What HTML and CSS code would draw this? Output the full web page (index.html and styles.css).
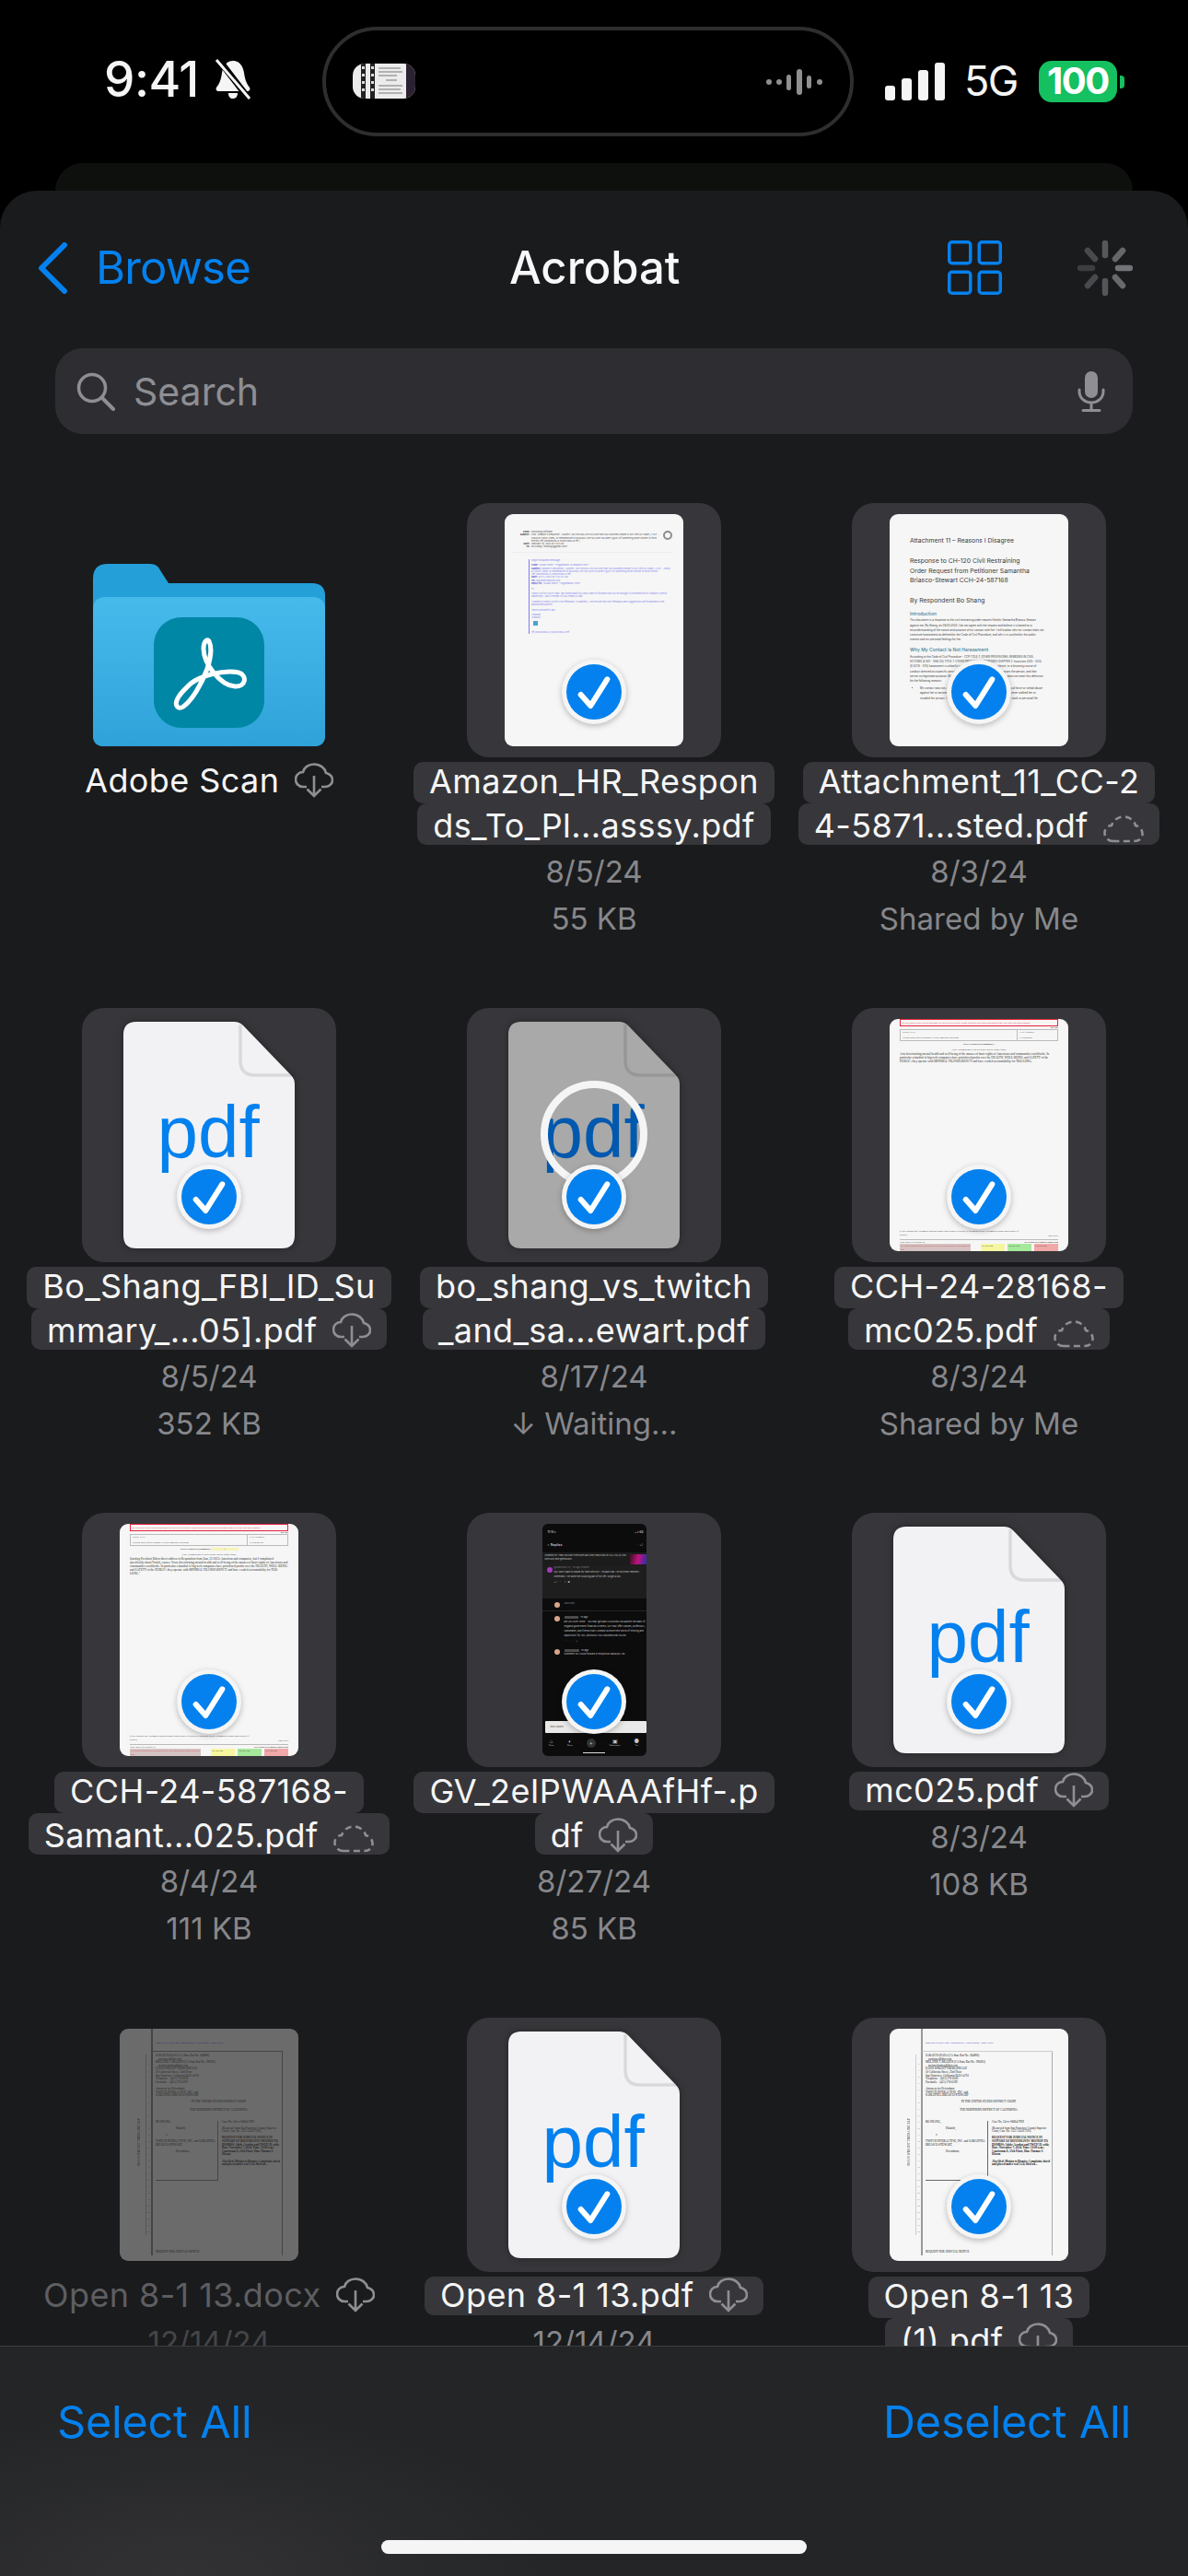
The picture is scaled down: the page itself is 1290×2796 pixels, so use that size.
FILE: index.html
```html
<!DOCTYPE html>
<html lang="en">
<head>
    <meta charset="UTF-8">
    <meta name="viewport" content="width=device-width, initial-scale=1.0">
    <title>Acrobat</title>
    <link rel="stylesheet" href="styles.css">
</head>
<body>
    <svg class="sprites" width="0" height="0">
        <symbol id="cloud-down" viewBox="0 0 42 38">
            <path d="M13 26H9C4 26 1 22 1 18C1 13 5 10 9 10C10 5 15 1.500 21 1.500C28 1.500 33 6 34 11C38 12 41 15 41 19C41 23 37 26 33 26H29" fill="none" stroke="#8e8e93" stroke-width="2.600"/>
            <path d="M21 14V36M13.500 28.500L21 36L28.500 28.500" fill="none" stroke="#8e8e93" stroke-width="2.600"/>
        </symbol>
        <symbol id="cloud-dash" viewBox="0 0 44 30">
            <path d="M11 28C5 28 1.500 24 1.500 19C1.500 14 5 11 9 11C11 5 16 1.500 22 1.500C29 1.500 34 6 35 11C39 12 42.500 15 42.500 20C42.500 25 39 28 33 28H11" fill="none" stroke="#8e8e93" stroke-width="2.600" stroke-dasharray="7 4.500"/>
        </symbol>
        <symbol id="check" viewBox="0 0 70 70">
            <circle cx="35" cy="35" r="35" fill="#f5f5f5"/>
            <circle cx="35" cy="35" r="30" fill="#0481ee"/>
            <path d="M20.700 38L31.300 50L49.300 21.300" fill="none" stroke="#fff" stroke-width="6" stroke-linecap="round" stroke-linejoin="round"/>
        </symbol>
        <symbol id="pdf-file" viewBox="0 0 186 246">
            <path d="M14 0H120Q126 0 130 4L182 58Q186 62 186 68V232Q186 246 172 246H14Q0 246 0 232V14Q0 0 14 0Z" fill="currentColor"/>
            <path d="M127 3V42Q127 58 143 58H184" fill="none" stroke="#000" stroke-opacity=".1" stroke-width="3.500"/>
        </symbol>
    </svg>

    <div class="status-bar">
        <div class="status-left">
            <span class="time">9:41</span>
            <svg class="bell" viewBox="0 0 40 44">
                <path d="M20 2C27 2 31 8 32 15C33 23 35 27 38 31C39 33 38 35 36 35H4C2 35 1 33 2 31C5 27 7 23 8 15C9 8 13 2 20 2ZM15 37H25C25 41 23 43 20 43C17 43 15 41 15 37Z" fill="#f5f5f5"/>
                <path d="M4 0L37 43" stroke="#000" stroke-width="7"/>
                <path d="M2 1L38 43" stroke="#f5f5f5" stroke-width="3"/>
            </svg>
        </div>
        <div class="island">
            <svg class="island-thumb" viewBox="0 0 68 38">
                <rect width="68" height="38" fill="#ececec"/>
                <rect x="9" width="5" height="38" fill="#222"/>
                <rect x="19" width="5" height="38" fill="#222"/>
                <path d="M10 3h3v3h-3zM10 11h3v3h-3zM10 19h3v3h-3zM10 27h3v3h-3zM20 3h3v3h-3zM20 11h3v3h-3zM20 19h3v3h-3zM20 27h3v3h-3z" fill="#ddd"/>
                <rect x="58" width="10" height="38" fill="#2a2230"/>
                <path d="M28 5h24M28 9h26M28 13h20M36 18h12M28 24h26M28 28h24M28 32h26" stroke="#777" stroke-width="1.200"/>
            </svg>
            <svg class="wave" viewBox="0 0 61 28">
                <g fill="#8f8f8f">
                    <rect x="0" y="11" width="6" height="6" rx="3"/>
                    <rect x="11" y="11" width="6" height="6" rx="3"/>
                    <rect x="22" y="6" width="5" height="17" rx="2.500"/>
                    <rect x="33" y="0" width="6" height="28" rx="3"/>
                    <rect x="44" y="7" width="5" height="14" rx="2.500"/>
                    <rect x="55" y="11" width="6" height="6" rx="3"/>
                </g>
            </svg>
        </div>
        <div class="status-right">
            <div class="signal">
                <span class="bar bar-1"></span>
                <span class="bar bar-2"></span>
                <span class="bar bar-3"></span>
                <span class="bar bar-4"></span>
            </div>
            <span class="network">5G</span>
            <div class="battery"><span class="battery-level">100</span><span class="battery-tip"></span></div>
        </div>
    </div>
    <div class="back-sheet"></div>

    <div class="sheet">
        <div class="nav">
            <div class="nav-back">
                <svg class="chevron" viewBox="0 0 34 56">
                    <path d="M30 3L5 28L30 53" fill="none" stroke="#0481ee" stroke-width="6" stroke-linecap="round" stroke-linejoin="round"/>
                </svg>
                <span>Browse</span>
            </div>
            <div class="nav-title">Acrobat</div>
            <div class="nav-actions">
                <svg class="grid-icon" viewBox="0 0 59 59">
                    <g fill="none" stroke="#0481ee" stroke-width="3.500">
                        <rect x="1.750" y="1.750" width="23" height="23" rx="3"/>
                        <rect x="34.250" y="1.750" width="23" height="23" rx="3"/>
                        <rect x="1.750" y="34.250" width="23" height="23" rx="3"/>
                        <rect x="34.250" y="34.250" width="23" height="23" rx="3"/>
                    </g>
                </svg>
                <svg class="spinner" viewBox="0 0 60 60">
                    <g stroke-width="6.500" stroke-linecap="round">
                        <path d="M30 3V16" stroke="#58585c"/>
                        <path d="M49 11L41 20" stroke="#67676b"/>
                        <path d="M57 30H44" stroke="#737377"/>
                        <path d="M49 49L41 40" stroke="#6a6a6e"/>
                        <path d="M30 57V44" stroke="#55555a"/>
                        <path d="M11 49L19 40" stroke="#4a4a4e"/>
                        <path d="M3 30H16" stroke="#3e3e42"/>
                        <path d="M11 11L19 20" stroke="#4a4a4e"/>
                    </g>
                </svg>
            </div>
        </div>

        <div class="search">
            <svg class="search-icon" viewBox="0 0 42 42">
                <circle cx="17" cy="17" r="14.500" fill="none" stroke="#8e8e93" stroke-width="3.500"/>
                <path d="M27.500 27.500L40 40" stroke="#8e8e93" stroke-width="4" stroke-linecap="round"/>
            </svg>
            <span class="search-text">Search</span>
            <svg class="mic" viewBox="0 0 30 44">
                <rect x="8" y="0" width="14" height="29" rx="7" fill="#8e8e93"/>
                <path d="M2 20V22C2 29 8 34 15 34C22 34 28 29 28 22V20M15 34V42M6 42.500H24" fill="none" stroke="#8e8e93" stroke-width="3" stroke-linecap="round"/>
            </svg>
        </div>

        <div class="files">
            <!-- row 1 -->
            <div class="item">
                <div class="tile tile-folder">
                    <svg class="folder" viewBox="0 0 252 198">
                        <defs>
                            <linearGradient id="folder-front" x1="0" y1="0" x2="0" y2="1">
                                <stop offset="0" stop-color="#47baec"/>
                                <stop offset="1" stop-color="#2fa3d9"/>
                            </linearGradient>
                        </defs>
                        <path d="M0 186V16Q0 0 16 0H62Q70 0 73 7L82 21H238Q252 21 252 35V186Q252 198 240 198H12Q0 198 0 186Z" fill="#259fd7"/>
                        <path d="M0 186V50Q0 36 14 36H238Q252 36 252 50V186Q252 198 240 198H12Q0 198 0 186Z" fill="url(#folder-front)"/>
                        <rect x="66" y="58" width="120" height="120" rx="30" fill="#0087a6"/>
                        <path d="M106 130C116 122 142 114 158 118C168 121 166 134 154 133C138 132 120 108 120 92C120 84 124 81 126 84C129 90 128 102 124 114C118 130 108 148 98 155C92 159 88 153 92 146C95 140 102 134 106 130Z" fill="none" stroke="#fff" stroke-width="5" stroke-linejoin="round"/>
                    </svg>
                </div>
                <div class="label">
                    <span class="line plain">Adobe Scan <svg class="cloud"><use href="#cloud-down"/></svg></span>
                </div>
            </div>

            <div class="item">
                <div class="tile">
                    <div class="doc doc-mail">
                        <div class="mail-top">
                            <div class="mail-head">
                                <b>From:</b><span>bo5shang software</span>
                                <b>Subject:</b><span>Fwd: Amazon's Response - Subject: [0373935d] Are you sure that your business model is not Tiers to Trade | T.R.E. - Fraud by voice, video, or telemedicine in BANK&amp;FI Are you sure you aren't guilty of something more sinister to form entries [ref_00D00000x8_5000Y000x8 ref ]</span>
                                <b>Date:</b><span>February 10, 2024 at 3:04 AM</span>
                                <b>To:</b><span>Bo Shang &lt;bshang1@gmail.com&gt;</span>
                            </div>
                            <i class="mail-avatar"></i>
                        </div>
                        <div class="mail-quote">
                            <p>Begin forwarded message:</p>
                            <p><b>From:</b> "Susan Smith" &lt;hr@amazon-hr.amazon.com&gt;<br><b>Subject:</b> Amazon's Response - Subject: [0373935d] Are you sure that your business model is not Tiers to Trade | T.R.E. - Fraud by voice, video, or telemedicine in BANK&amp;FI Are you sure you aren't guilty of something more sinister to form entries [ref_00D00000x8_5000Y000x8 ref]<br><b>Date:</b> July 8, 2024 at 11:03:47 AM<br><b>To:</b> hr@smartwebsite.com<br><b>Reply-To:</b> "Susan Smith" &lt;hr@amazon.com&gt;</p>
                            <p>Hi</p>
                            <p>Thank you for your e-mail. We understand fully and I want to forward that you've brought to the attention of Amazon's senior leadership. I am in receipt of your email to chat.</p>
                            <p>I wanted to thank you for your feedback. In addition, I will ensure that your feedback and suggestions are forwarded to the appropriate parties.</p>
                            <p>Have a wonderful day.</p>
                            <p>Amanda<br>Amazon</p>
                            <i class="mail-logo"></i>
                            <p class="mail-ref">ref_00D00000x8_5000Y000x8 ref</p>
                        </div>
                    </div>
                    <svg class="badge"><use href="#check"/></svg>
                </div>
                <div class="label">
                    <span class="line">Amazon_HR_Respon</span>
                    <span class="line">ds_To_Pl...asssy.pdf</span>
                </div>
                <div class="meta">8/5/24</div>
                <div class="meta">55 KB</div>
            </div>

            <div class="item">
                <div class="tile">
                    <div class="doc doc-attach">
                        <h4 class="attach-first">Attachment 11 – Reasons I Disagree</h4>
                        <h4>Response to CH-120 Civil Restraining<br>Order Request from Petitioner Samantha<br>Briasco-Stewart CCH-24-587168</h4>
                        <h4>By Respondent Bo Shang</h4>
                        <h5>Introduction</h5>
                        <p>This document is a response to the civil restraining order request filed by Samantha Briasco-Stewart against me, Bo Shang, on 08/01/2024. I do not agree with the request and believe it is based on a misunderstanding of the nature and purpose of my contact with her. I will explain why my contact does not constitute harassment as defined by the Code of Civil Procedure, and why it is justified by the public interest and my personal feelings for her.</p>
                        <h5>Why My Contact Is Not Harassment</h5>
                        <p>According to the Code of Civil Procedure - CCP TITLE 7. OTHER PROVISIONAL REMEDIES IN CIVIL ACTIONS [§ 501 - 1062.20] TITLE 7. OTHER PROVISIONAL REMEDIES CHAPTER 3. Injunction [525 - 534] [§ 527.6 - 574] harassment is unlawful violence, a credible threat of violence, or a knowing course of conduct directed at a specific person that seriously alarms, annoys, or harasses the person, and that serves no legitimate purpose. My conduct toward Samantha Briasco-Stewart does not meet this definition for the following reasons:</p>
                        <ul>
                            <li>My contact was non-violent and non-threatening. I never used any physical force or verbal abuse against her or anyone else. I never made any unwanted advances, and I never stalked her or invaded her privacy. I never damaged her property or interfered with her work or personal life.</li>
                        </ul>
                    </div>
                    <svg class="badge"><use href="#check"/></svg>
                </div>
                <div class="label">
                    <span class="line">Attachment_11_CC-2</span>
                    <span class="line">4-5871...sted.pdf <svg class="cloud cloud-dashed"><use href="#cloud-dash"/></svg></span>
                </div>
                <div class="meta">8/3/24</div>
                <div class="meta">Shared by Me</div>
            </div>

            <!-- row 2 -->
            <div class="item">
                <div class="tile">
                    <svg class="pdf-doc" viewBox="0 0 186 246"><use href="#pdf-file"/><text class="pdf-word" x="92" y="147">pdf</text></svg>
                    <svg class="badge"><use href="#check"/></svg>
                </div>
                <div class="label">
                    <span class="line">Bo_Shang_FBI_ID_Su</span>
                    <span class="line">mmary_...05].pdf <svg class="cloud"><use href="#cloud-down"/></svg></span>
                </div>
                <div class="meta">8/5/24</div>
                <div class="meta">352 KB</div>
            </div>

            <div class="item">
                <div class="tile">
                    <svg class="pdf-doc pdf-waiting" viewBox="0 0 186 246"><use href="#pdf-file"/><text class="pdf-word" x="92" y="147">pdf</text></svg>
                    <div class="progress-ring"></div>
                    <svg class="badge"><use href="#check"/></svg>
                </div>
                <div class="label">
                    <span class="line">bo_shang_vs_twitch</span>
                    <span class="line">_and_sa...ewart.pdf</span>
                </div>
                <div class="meta">8/17/24</div>
                <div class="meta">↓ Waiting...</div>
            </div>

            <div class="item">
                <div class="tile">
                    <div class="doc doc-form">
                        <div class="form-alert">To keep other people from seeing what you entered on your form, please press the Clear This Form button at the end of the form when finished.</div>
                        <div class="form-number">MC-025</div>
                        <div class="form-case">
                            <div>SHORT TITLE:<br>President Biden Official Response to Twitch Complaint by Bo Shang</div>
                            <div>CASE NUMBER:<br>CCH-24-28168</div>
                        </div>
                        <div class="form-title"><b>ATTACHMENT (Number):</b> 1</div>
                        <div class="form-sub">(This Attachment may be used with any Judicial Council form.)</div>
                        <p>Acts deteriorating mental health and well-being of the masses of basic rights of Americans and communities worldwide. In particular a handful of big-tech companies have prioritized profits over the HEALTH, WELL-BEING and SAFETY of the PUBLIC; they operate with MINIMAL TRANSPARENCY and have evaded accountability for TOO LONG.</p>
                        <div class="form-foot">
                            <div class="form-note">(If the item that this Attachment concerns is made under penalty of perjury, all statements in this Attachment are made under penalty of perjury.)</div>
                            <div class="form-page">Page 4 of 5</div>
                            <div class="form-line"><span>Form Approved for Optional Use</span><b>ATTACHMENT to Judicial Council Form</b></div>
                            <div class="form-buttons">
                                <span class="form-btn btn-red">For your protection and privacy, please press the Clear This Form button after you have printed the form.</span>
                                <span class="form-btn btn-yellow">Save This Form</span>
                                <span class="form-btn btn-green">Print This Form</span>
                                <span class="form-btn btn-pink">Clear This Form</span>
                            </div>
                        </div>
                    </div>
                    <svg class="badge"><use href="#check"/></svg>
                </div>
                <div class="label">
                    <span class="line">CCH-24-28168-</span>
                    <span class="line">mc025.pdf <svg class="cloud cloud-dashed"><use href="#cloud-dash"/></svg></span>
                </div>
                <div class="meta">8/3/24</div>
                <div class="meta">Shared by Me</div>
            </div>

            <!-- row 3 -->
            <div class="item">
                <div class="tile">
                    <div class="doc doc-form">
                        <div class="form-alert">To keep other people from seeing what you entered on your form, please press the Clear This Form button at the end of the form when finished.</div>
                        <div class="form-number">MC-025</div>
                        <div class="form-case">
                            <div>SHORT TITLE:<br>President Biden Official Response to Twitch Complaint by Bo Shang</div>
                            <div>CASE NUMBER:<br>CCH-24-587168</div>
                        </div>
                        <div class="form-title"><b>ATTACHMENT (Number):</b> <mark>1</mark></div>
                        <div class="form-sub">(This Attachment may be used with any Judicial Council form.)</div>
                        <p>Quoting President Biden direct address to Respondent from June 23 2023: American and companies, but I complained specifically about Twitch, causes. Vows deteriorating mental health and well-being of the masses of basic rights of Americans and communities worldwide. In particular a handful of big-tech companies have prioritized profits over the HEALTH, WELL-BEING and SAFETY of the PUBLIC; they operate with MINIMAL TRANSPARENCY and have evaded accountability for TOO LONG."</p>
                        <div class="form-foot">
                            <div class="form-note">(If the item that this Attachment concerns is made under penalty of perjury, all statements in this Attachment are made under penalty of perjury.)</div>
                            <div class="form-page">Page 4 of 5</div>
                            <div class="form-line"><span>Form Approved for Optional Use</span><b>ATTACHMENT to Judicial Council Form</b></div>
                            <div class="form-buttons">
                                <span class="form-btn btn-red">For your protection and privacy, please press the Clear This Form button after you have printed the form.</span>
                                <span class="form-btn btn-yellow">Save This Form</span>
                                <span class="form-btn btn-green">Print This Form</span>
                                <span class="form-btn btn-pink">Clear This Form</span>
                            </div>
                        </div>
                    </div>
                    <svg class="badge"><use href="#check"/></svg>
                </div>
                <div class="label">
                    <span class="line">CCH-24-587168-</span>
                    <span class="line">Samant...025.pdf <svg class="cloud cloud-dashed"><use href="#cloud-dash"/></svg></span>
                </div>
                <div class="meta">8/4/24</div>
                <div class="meta">111 KB</div>
            </div>

            <div class="item">
                <div class="tile">
                    <div class="doc doc-phone">
                        <div class="phone-status"><span>11:14 ▾</span><span>▪ ▾ 60</span></div>
                        <div class="phone-head"><span>‹ &nbsp;Replies</span><span>▫ ◦ ⁝</span></div>
                        <div class="phone-video"><span>Comment on "Yeah cool now? even done back shiny match and on USA-USA lol, how does ours have general also"</span><i></i></div>
                        <div class="phone-thread">
                            <i></i>
                            <div>
                                <div class="phone-note">@shantown-i7c · 9h ago (edited)</div>
                                <p>No I don't want to waste my time with MIT. I'm past that. I'm not even remotely interested. I've done the studying part of my life. Forget a job.</p>
                                <div class="phone-icons">♦ 1 &nbsp; ♢ &nbsp; ▫ 1 &nbsp; ●</div>
                            </div>
                        </div>
                        <div class="phone-add"><i></i>Add a reply...</div>
                        <div class="phone-comments">
                            <div class="phone-comment"><i></i><div><span class="phone-chip">@user123</span> · 7h ago<p>are you sure? while... you may get paid US pounds via salaries the Bank of England government financial systems, MIT may offer classes, professors, classmates, and friends that'll unleash a whole new world of thinking and opportunity for you. previously you indicated that you wo</p><div class="phone-icons">♢ &nbsp; ♢ &nbsp; ▫ &nbsp; ◦</div></div></div>
                            <div class="phone-comment"><i></i><div><span class="phone-chip">@user456</span> · 7h ago<p>Comment so I could forward to enquire as Nasia pls. Ha</p></div></div>
                        </div>
                        <div class="phone-bar">Reply added</div>
                        <div class="phone-tabs">
                            <span>⌂<small>Home</small></span><span>◐<small>Shorts</small></span><span class="phone-plus">+</span><span>▣<small>Subscriptions</small></span><span>●<small>You</small></span>
                        </div>
                        <div class="phone-home"></div>
                    </div>
                    <svg class="badge"><use href="#check"/></svg>
                </div>
                <div class="label">
                    <span class="line">GV_2eIPWAAAfHf-.p</span>
                    <span class="line">df <svg class="cloud"><use href="#cloud-down"/></svg></span>
                </div>
                <div class="meta">8/27/24</div>
                <div class="meta">85 KB</div>
            </div>

            <div class="item">
                <div class="tile">
                    <svg class="pdf-doc" viewBox="0 0 186 246"><use href="#pdf-file"/><text class="pdf-word" x="92" y="147">pdf</text></svg>
                    <svg class="badge"><use href="#check"/></svg>
                </div>
                <div class="label">
                    <span class="line">mc025.pdf <svg class="cloud"><use href="#cloud-down"/></svg></span>
                </div>
                <div class="meta">8/3/24</div>
                <div class="meta">108 KB</div>
            </div>

            <!-- row 4 -->
            <div class="item item-off">
                <div class="tile">
                    <div class="doc doc-court">
                        <div class="court-side">DAVIS WRIGHT TREMAINE LLP</div>
                        <div class="court-filed">Case 3:24-cv-06664-JSC &nbsp; Document 8-1 &nbsp; Filed 09/30/24 &nbsp; Page 1 of 84</div>
                        <div class="court-body">
                            <div class="court-nums">1<br>2<br>3<br>4<br>5<br>6<br>7<br>8<br>9<br>10<br>11<br>12<br>13<br>14<br>15<br>16<br>17<br>18<br>19<br>20<br>21<br>22<br>23<br>24<br>25<br>26<br>27<br>28</div>
                            <p>SARAH NAPADA (CA State Bar No. 264986)<br>&nbsp; &nbsp; sarajones@dwt.com<br>MELANIE J. BRADEN (CA State Bar No. 196383)<br>&nbsp; &nbsp; melaniebraden@dwt.com<br>DAVIS WRIGHT TREMAINE LLP<br>50 California Street, 23rd Floor<br>San Francisco, California 94111-4701<br>Telephone: &nbsp; (415) 276-6500<br>Facsimile: &nbsp; (415) 276-6599</p>
                            <p>Attorneys for Defendants<br>TWITCH INTERACTIVE, INC. and<br>SAMANTHA BRIASCO-STEWART</p>
                            <p class="court-center">IN THE UNITED STATES DISTRICT COURT</p>
                            <p class="court-center">THE NORTHERN DISTRICT OF CALIFORNIA</p>
                            <div class="court-caption">
                                <div>BO SHANG,<br><br><span class="court-party">Plaintiff,</span><br><br><span class="court-v">v.</span><br><br>TWITCH INTERACTIVE, INC. and SAMANTHA BRIASCO-STEWART,<br><br><span class="court-party">Defendants.</span></div>
                                <div>Case No. 24-cv-06664-TSH<br><br>(Removed from San Francisco County Superior Court, Case No. CGC-24-617393)<br><br><b>REQUEST FOR JUDICIAL NOTICE IN SUPPORT OF DEFENDANTS' MOTION TO DISMISS; Adobe Acrobat and TWITCH, with; Date: November 7, 2024; Time: 10:00 a.m.; Courtroom E, 15th Floor; Hon. Thomas S. Hixson</b><br><br><b>Also filed: Motion to Dismiss; Complaint, dated and placed under seal 1:24; filed on...</b></div>
                            </div>
                            <p class="court-end">REQUEST FOR JUDICIAL NOTICE</p>
                        </div>
                    </div>
                </div>
                <div class="label">
                    <span class="line plain">Open 8-1 13.docx <svg class="cloud"><use href="#cloud-down"/></svg></span>
                </div>
                <div class="meta">12/14/24</div>
            </div>

            <div class="item">
                <div class="tile">
                    <svg class="pdf-doc" viewBox="0 0 186 246"><use href="#pdf-file"/><text class="pdf-word" x="92" y="147">pdf</text></svg>
                    <svg class="badge"><use href="#check"/></svg>
                </div>
                <div class="label">
                    <span class="line">Open 8-1 13.pdf <svg class="cloud"><use href="#cloud-down"/></svg></span>
                </div>
                <div class="meta">12/14/24</div>
            </div>

            <div class="item">
                <div class="tile">
                    <div class="doc doc-court">
                        <div class="court-side">DAVIS WRIGHT TREMAINE LLP</div>
                        <div class="court-filed">Case 3:24-cv-06664-JSC &nbsp; Document 8-1 &nbsp; Filed 09/30/24 &nbsp; Page 1 of 84</div>
                        <div class="court-body">
                            <div class="court-nums">1<br>2<br>3<br>4<br>5<br>6<br>7<br>8<br>9<br>10<br>11<br>12<br>13<br>14<br>15<br>16<br>17<br>18<br>19<br>20<br>21<br>22<br>23<br>24<br>25<br>26<br>27<br>28</div>
                            <p>SARAH NAPADA (CA State Bar No. 264986)<br>&nbsp; &nbsp; sarajones@dwt.com<br>MELANIE J. BRADEN (CA State Bar No. 196383)<br>&nbsp; &nbsp; melaniebraden@dwt.com<br>DAVIS WRIGHT TREMAINE LLP<br>50 California Street, 23rd Floor<br>San Francisco, California 94111-4701<br>Telephone: &nbsp; (415) 276-6500<br>Facsimile: &nbsp; (415) 276-6599</p>
                            <p>Attorneys for Defendants<br>TWITCH INTERACTIVE, INC. and<br>SAMANTHA BRIASCO-STEWART</p>
                            <p class="court-center">IN THE UNITED STATES DISTRICT COURT</p>
                            <p class="court-center">THE NORTHERN DISTRICT OF CALIFORNIA</p>
                            <div class="court-caption">
                                <div>BO SHANG,<br><br><span class="court-party">Plaintiff,</span><br><br><span class="court-v">v.</span><br><br>TWITCH INTERACTIVE, INC. and SAMANTHA BRIASCO-STEWART,<br><br><span class="court-party">Defendants.</span></div>
                                <div>Case No. 24-cv-06664-TSH<br><br>(Removed from San Francisco County Superior Court, Case No. CGC-24-617393)<br><br><b>REQUEST FOR JUDICIAL NOTICE IN SUPPORT OF DEFENDANTS' MOTION TO DISMISS; Adobe Acrobat and TWITCH, with; Date: November 7, 2024; Time: 10:00 a.m.; Courtroom E, 15th Floor; Hon. Thomas S. Hixson</b><br><br><b>Also filed: Motion to Dismiss; Complaint, dated and placed under seal 1:24; filed on...</b></div>
                            </div>
                            <p class="court-end">REQUEST FOR JUDICIAL NOTICE</p>
                        </div>
                    </div>
                    <svg class="badge"><use href="#check"/></svg>
                </div>
                <div class="label">
                    <span class="line">Open 8-1 13</span>
                    <span class="line">(1).pdf <svg class="cloud"><use href="#cloud-down"/></svg></span>
                </div>
            </div>
        </div>

        <div class="toolbar">
            <div class="toolbar-actions">
                <span>Select All</span>
                <span>Deselect All</span>
            </div>
            <div class="home-indicator"></div>
        </div>
    </div>
</body>
</html>
```

FILE: styles.css
```css
* {
    box-sizing: border-box;
}

body {
    margin: 0;
    width: 1290px;
    height: 2796px;
    overflow: hidden;
    display: flex;
    flex-direction: column;
    background-color: #000;
    color: #f5f5f5;
    font-family: Inter, "Liberation Sans", sans-serif;
}

.sprites {
    position: absolute;
}

/* status bar */

.status-bar {
    height: 177px;
    flex-shrink: 0;
    display: flex;
    align-items: flex-start;
    padding-top: 29px;
}

.status-left {
    width: 350px;
    height: 80px;
    padding: 34px 0 0 113px;
    display: flex;
    align-items: center;
    gap: 17px;
}

.time {
    font-size: 53px;
    font-weight: 500;
    line-height: 46px;
    letter-spacing: -0.5px;
}

.bell {
    width: 40px;
    height: 44px;
}

.island {
    width: 577px;
    height: 119px;
    border: 4px solid #2e2e2e;
    border-radius: 60px;
    display: flex;
    align-items: center;
    justify-content: space-between;
    padding: 0 30px 2px 29px;
}

.island-thumb {
    width: 68px;
    height: 38px;
    border-radius: 13px;
}

.wave {
    width: 61px;
    height: 28px;
    margin-top: 2px;
}

.status-right {
    padding: 37px 0 0 34px;
    display: flex;
    align-items: flex-end;
}

.signal {
    display: flex;
    align-items: flex-end;
    gap: 7px;
    height: 41px;
}

.bar {
    width: 11px;
    border-radius: 3px;
    background-color: #f5f5f5;
}

.bar-1 { height: 16px; }
.bar-2 { height: 24px; }
.bar-3 { height: 33px; }
.bar-4 { height: 41px; }

.network {
    font-size: 45px;
    line-height: 42px;
    margin-left: 21px;
    letter-spacing: -1.500px;
}

.battery {
    display: flex;
    align-items: center;
    margin: 0 0 -2px 23px;
}

.battery-level {
    width: 85px;
    height: 45px;
    border-radius: 14px;
    background-color: #14c060;
    font-size: 40px;
    font-weight: 700;
    line-height: 44px;
    text-align: center;
    letter-spacing: -1.500px;
    color: #fff;
}

.battery-tip {
    width: 5px;
    height: 14px;
    margin-left: 3px;
    border-radius: 0 4px 4px 0;
    background-color: #14c060;
}

.back-sheet {
    height: 30px;
    flex-shrink: 0;
    margin: 0 60px;
    border-radius: 30px 30px 0 0;
    background-color: #0d100d;
}

/* main sheet */

.sheet {
    flex: 1;
    min-height: 0;
    display: flex;
    flex-direction: column;
    border-radius: 40px 40px 0 0;
    background-color: #1a1b1d;
}

.nav {
    height: 167px;
    flex-shrink: 0;
    margin-bottom: 4px;
    padding: 0 60px 0 40px;
    display: grid;
    grid-template-columns: 513px auto 1fr;
    align-items: center;
    font-size: 49px;
}

.nav-back {
    display: flex;
    align-items: center;
    gap: 30px;
    color: #0481ee;
    letter-spacing: -0.8px;
}

.chevron {
    width: 34px;
    height: 56px;
}

.nav-title {
    font-weight: 500;
    color: #f8f8f8;
}

.nav-actions {
    display: flex;
    align-items: center;
    justify-content: flex-end;
    gap: 82px;
}

.grid-icon {
    width: 59px;
    height: 59px;
}

.spinner {
    width: 60px;
    height: 60px;
}

.search {
    height: 93px;
    flex-shrink: 0;
    margin: 0 60px;
    padding: 0 30px 0 23px;
    display: flex;
    align-items: center;
    border-radius: 30px;
    background-color: #2e2e32;
}

.search-icon {
    width: 42px;
    height: 42px;
}

.search-text {
    flex: 1;
    margin-left: 20px;
    font-size: 41px;
    color: #8e8e93;
}

.mic {
    width: 30px;
    height: 44px;
}

/* file grid */

.files {
    flex: 1;
    min-height: 0;
    overflow: hidden;
    padding: 75px 18px 0;
    display: grid;
    grid-template-columns: repeat(3, 418px);
    grid-auto-rows: 548px;
}

.item {
    display: flex;
    flex-direction: column;
    align-items: center;
}

.tile {
    position: relative;
    width: 276px;
    height: 276px;
    flex-shrink: 0;
    display: flex;
    align-items: center;
    justify-content: center;
    border-radius: 24px;
    background-color: #37373b;
}

.tile-folder,
.item-off .tile {
    background: none;
}

.tile-folder {
    align-items: flex-end;
    padding-bottom: 12px;
}

.folder {
    width: 252px;
    height: 198px;
}

.badge {
    position: absolute;
    left: 103px;
    bottom: 36px;
    width: 70px;
    height: 70px;
    filter: drop-shadow(0 2px 3px rgba(0, 0, 0, 0.25));
}

.progress-ring {
    position: absolute;
    left: 80px;
    top: 79px;
    width: 116px;
    height: 116px;
    border: 8px solid #f5f5f5;
    border-radius: 50%;
}

.label {
    margin-top: 5px;
    display: flex;
    flex-direction: column;
    align-items: center;
    font-size: 36px;
    letter-spacing: 0.4px;
}

.line {
    height: 45px;
    padding: 0 17px 3px;
    display: flex;
    align-items: center;
    gap: 6px;
    white-space: pre;
    border-radius: 10px;
    background-color: #37373b;
}

.line + .line {
    padding: 3px 17px 0;
}

.line:only-child {
    height: 42px;
}

.line.plain {
    background: none;
}

.cloud {
    width: 42px;
    height: 38px;
    flex-shrink: 0;
}

.cloud-dashed {
    width: 44px;
    height: 30px;
    margin-top: 8px;
}

.meta {
    height: 51px;
    font-size: 33px;
    line-height: 51px;
    color: #87878b;
}

.label + .meta {
    margin-top: 4px;
}

.item-off .line {
    color: #5e5e61;
}

.item-off .meta {
    color: #454548;
}

/* pdf icon */

.pdf-doc {
    width: 186px;
    height: 246px;
    color: #f2f2f4;
    filter: drop-shadow(0 0 4px rgba(0, 0, 0, 0.35));
}

.pdf-word {
    font-family: "Liberation Sans", sans-serif;
    font-size: 80px;
    text-anchor: middle;
    fill: #0481ee;
}

.pdf-waiting {
    color: #a9a9a9;
}

.pdf-waiting .pdf-word {
    fill: #0059ae;
}

/* page thumbnails */

.doc {
    position: relative;
    width: 194px;
    height: 252px;
    overflow: hidden;
    display: flex;
    flex-direction: column;
    border-radius: 9px;
    background-color: #f6f6f6;
    color: #333;
}

.doc p {
    margin: 0;
}

.doc-mail {
    padding: 18px 12px 0 8px;
    font-size: 2.500px;
    line-height: 3.300px;
    color: #555;
}

.mail-top {
    display: flex;
    gap: 3px;
    padding-bottom: 3px;
    border-bottom: 1px solid #eee;
}

.mail-head {
    flex: 1;
    display: grid;
    grid-template-columns: 19px 1fr;
    column-gap: 2px;
}

.mail-head b {
    text-align: right;
    color: #333;
}

.mail-avatar {
    flex: 0 0 10px;
    height: 10px;
    border: 2px solid #8c8c8c;
    border-radius: 50%;
}

.mail-quote {
    margin: 7px 0 0 18px;
    padding-left: 2px;
    border-left: 1px solid #7c7cf0;
    color: #8484ea;
}

.mail-quote b {
    color: #4b4bd8;
}

.mail-quote p {
    margin-bottom: 2.200px;
}

.mail-logo {
    display: block;
    width: 5px;
    height: 5px;
    margin: -1px 0 0 2px;
    background-color: #4ba3d0;
}

.mail-quote .mail-ref {
    margin: 6px 0 0;
}

.doc-attach {
    padding: 24px 26px 0 22px;
    color: #3a3a3a;
}

.doc-attach h4 {
    margin: 11.500px 0 0;
    font-size: 6.800px;
    line-height: 10.600px;
    font-weight: 400;
    white-space: nowrap;
}

.doc-attach .attach-first {
    margin-top: 0;
}

.doc-attach h5 {
    margin: 5px 0 1.500px;
    font-size: 5px;
    line-height: 7px;
    font-weight: 500;
    color: #3c7a94;
}

.doc-attach p,
.doc-attach ul {
    font-size: 2.900px;
    line-height: 5.200px;
}

.doc-attach ul {
    margin: 3px 0 0;
    padding-left: 11px;
}

.doc-form {
    padding: 0 11px;
    font-family: "Liberation Serif", serif;
    font-size: 3.300px;
    line-height: 4.100px;
    color: #333;
}

.form-alert {
    flex-shrink: 0;
    height: 8px;
    padding: 1px 2px;
    border: 1px solid #e8233c;
    font-family: "Liberation Sans", sans-serif;
    font-size: 2.200px;
    line-height: 4px;
    color: #e8233c;
    white-space: nowrap;
    overflow: hidden;
}

.form-number {
    text-align: right;
    font-size: 2.400px;
    line-height: 3px;
    font-weight: 700;
}

.form-case {
    display: grid;
    grid-template-columns: 1fr 44px;
    height: 13px;
    border: 1px solid #bbb;
    font-size: 2.200px;
    line-height: 5.500px;
    white-space: nowrap;
    overflow: hidden;
}

.form-case div {
    padding-left: 2px;
    overflow: hidden;
}

.form-case div + div {
    border-left: 1px solid #bbb;
}

.form-title {
    margin-top: 2px;
    text-align: center;
    font-size: 2.800px;
}

.form-title mark {
    padding: 0 14px;
    background-color: #f7f2b8;
}

.form-sub {
    text-align: center;
    font-size: 2.300px;
    line-height: 6px;
}

.form-foot {
    margin-top: auto;
    flex-shrink: 0;
}

.form-note {
    font-size: 2.400px;
    line-height: 3.800px;
    width: 132px;
}

.form-page {
    text-align: right;
    font-size: 2.400px;
    line-height: 3px;
    margin-top: -3px;
}

.form-line {
    display: flex;
    justify-content: space-between;
    border-top: 1px solid #bbb;
    margin-top: 2px;
    font-size: 2.100px;
    line-height: 4px;
    white-space: nowrap;
    overflow: hidden;
}

.form-buttons {
    display: flex;
    gap: 3px;
    height: 8px;
    font-size: 1.900px;
    line-height: 3.500px;
}

.form-btn {
    flex: 0 0 26px;
    overflow: hidden;
    white-space: nowrap;
    padding: 1px 1px 0;
}

.form-buttons .btn-red {
    flex: 1;
    min-width: 0;
    margin-right: 8px;
    white-space: normal;
    background-color: #d5c2c2;
    color: #d43030;
}

.btn-yellow { background-color: #f6f6a0; }
.btn-green { background-color: #a6e89c; }
.btn-pink { background-color: #f0a8a8; }

.doc-phone {
    width: 113px;
    border-radius: 6px;
    background-color: #0c0c0d;
    color: #c6c6c6;
    font-size: 2.800px;
    line-height: 4.900px;
}

.phone-status,
.phone-head {
    flex-shrink: 0;
    display: flex;
    justify-content: space-between;
    align-items: center;
    padding: 0 3px 0 6px;
    font-weight: 600;
}

.phone-status {
    height: 16px;
    padding-top: 3px;
    font-size: 3px;
}

.phone-head {
    height: 15px;
    font-size: 3.600px;
}

.phone-video {
    flex-shrink: 0;
    display: flex;
    gap: 2px;
    height: 14px;
    padding: 2px 0 1px 3px;
    background-color: #1c1c1c;
    font-size: 2.200px;
    line-height: 4.400px;
}

.phone-video i {
    flex: 0 0 18px;
    background: linear-gradient(100deg, #3a1020, #c01480 50%, #2b2bb0);
}

.phone-thread {
    flex-shrink: 0;
    display: flex;
    gap: 2px;
    height: 36px;
    padding: 1px 2px 0 5px;
    background-color: #1e1e1e;
    font-size: 2.500px;
    line-height: 4.900px;
}

.phone-thread i {
    flex: 0 0 6px;
    height: 6px;
    margin-top: 1px;
    border-radius: 50%;
    background-color: #a23cc0;
}

.phone-note {
    color: #777;
}

.phone-icons {
    color: #aaa;
    line-height: 6px;
}

.phone-add {
    flex-shrink: 0;
    display: flex;
    align-items: center;
    gap: 5px;
    height: 14px;
    padding-left: 13px;
    font-size: 2.200px;
    color: #888;
    border-bottom: 1px solid #222;
}

.phone-add i,
.phone-comment i {
    flex: 0 0 6px;
    height: 6px;
    border-radius: 50%;
    background-color: #d9a58a;
}

.phone-comments {
    flex: 1;
    min-height: 0;
    overflow: hidden;
    padding-top: 5px;
}

.phone-comment {
    display: flex;
    gap: 5px;
    padding: 0 1px 0 13px;
    margin-bottom: 5px;
    font-size: 2.500px;
    line-height: 4.900px;
}

.phone-chip {
    padding: 0 2px;
    background-color: #4a4a4a;
    color: #4a4a4a;
}

.phone-bar {
    flex-shrink: 0;
    height: 13px;
    line-height: 13px;
    margin-left: 3px;
    padding-left: 6px;
    border-radius: 1px;
    background-color: #e9e9e9;
    color: #555;
    font-size: 2.400px;
}

.phone-tabs {
    flex-shrink: 0;
    display: flex;
    justify-content: space-around;
    align-items: center;
    height: 21px;
    font-size: 6px;
    line-height: 6px;
    text-align: center;
}

.phone-tabs small {
    display: block;
    font-size: 1.800px;
    line-height: 3px;
}

.phone-plus {
    width: 10px;
    height: 10px;
    line-height: 9px;
    border-radius: 50%;
    background-color: #333;
}

.phone-home {
    flex-shrink: 0;
    width: 24px;
    height: 1px;
    margin: 0 auto 3px;
    background-color: #ddd;
}

.doc-court {
    padding: 0 17px 0 34px;
    font-family: "Liberation Serif", serif;
    font-size: 3.100px;
    line-height: 3.600px;
    color: #111;
}

.court-side {
    position: absolute;
    left: 20px;
    top: 97px;
    writing-mode: vertical-rl;
    transform: rotate(180deg);
    font-size: 3.200px;
    letter-spacing: 0.2px;
    color: #555;
}

.court-filed {
    flex-shrink: 0;
    height: 25px;
    padding: 13px 0 0 3px;
    border-left: 2px solid #999;
    border-bottom: 1px solid #ccc;
    font-family: "Liberation Sans", sans-serif;
    font-size: 2.300px;
    line-height: 4px;
    color: #3232c8;
    white-space: nowrap;
    overflow: hidden;
}

.court-body {
    flex: 1;
    margin-bottom: 6px;
    padding: 3px 0 0 3px;
    border-left: 2px solid #999;
    border-right: 1px solid #aaa;
    position: relative;
}

.court-nums {
    position: absolute;
    left: -8px;
    top: 3px;
    width: 6px;
    font-size: 2.400px;
    line-height: 7px;
    text-align: center;
    color: #777;
    border-left: 1px solid #ccc;
}

.court-body p {
    margin-bottom: 3.600px;
}

.court-body .court-center {
    margin: 0 0 5px;
    text-align: center;
}

.court-body .court-center:first-of-type {
    margin-top: 11px;
}

.court-caption {
    display: grid;
    grid-template-columns: 68px 1fr;
    margin-top: 9px;
    gap: 4px;
}

.court-caption div:first-child {
    height: 65px;
    border-right: 1px solid #666;
    border-bottom: 1px solid #666;
    padding-right: 2px;
}

.court-party {
    margin-left: 22px;
}

.court-v {
    margin-left: 11px;
}

.court-caption b {
    line-height: 3.300px;
}

.court-body .court-end {
    position: absolute;
    bottom: 1px;
    margin: 0;
}

.item-off .doc-court {
    background-color: #6b6b6b;
    color: #232323;
}

.item-off .court-filed {
    color: #23236c;
    border-color: #444;
}

.item-off .court-body,
.item-off .court-caption div:first-child {
    border-color: #444;
}

.item-off .court-nums {
    color: #3c3c3c;
    border-color: #555;
}

.item-off .court-side {
    color: #333;
}

/* bottom toolbar */

.toolbar {
    height: 250px;
    flex-shrink: 0;
    border-top: 1px solid #3b3c3e;
    background: radial-gradient(ellipse 420px 180px at 200px 100%, #323234 0, rgba(50, 50, 52, 0) 100%), #242527;
}

.toolbar-actions {
    height: 163px;
    padding: 0 62px;
    display: flex;
    align-items: center;
    justify-content: space-between;
    font-size: 48.500px;
    letter-spacing: -0.2px;
    color: #0481ee;
}

.home-indicator {
    width: 462px;
    height: 15px;
    margin: 47px auto 0;
    border-radius: 8px;
    background-color: #f5f5f5;
}
```
